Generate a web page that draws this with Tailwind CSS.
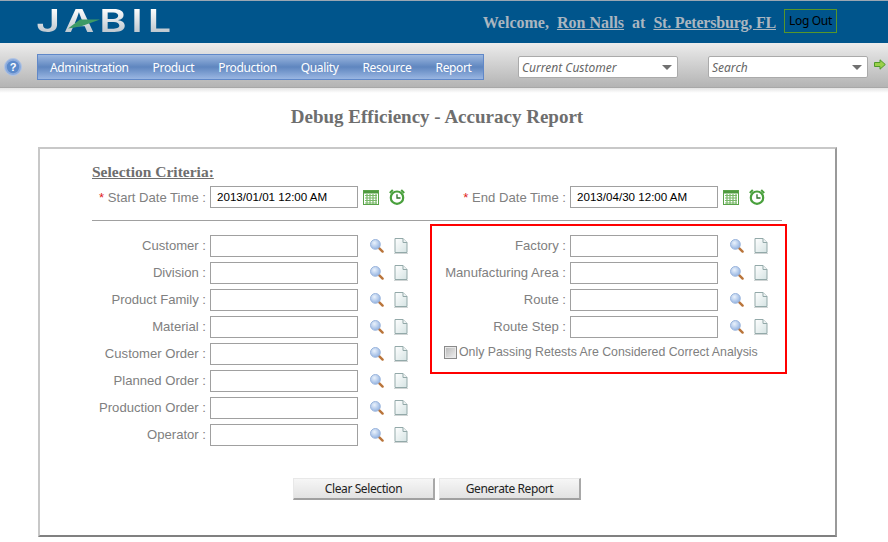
<!DOCTYPE html>
<html><head><meta charset="utf-8">
<script src="https://cdn.jsdelivr.net/npm/@tailwindcss/browser@4"></script>
</head>
<body class="bg-white w-[888px] h-[542px] overflow-hidden font-['Liberation_Sans',sans-serif]">
<svg width="0" height="0" class="absolute">
<defs>
<radialGradient id="gl" cx="0.4" cy="0.35" r="0.7"><stop offset="0" stop-color="#eaf2fc"/><stop offset="1" stop-color="#8fb0e0"/></radialGradient>
<linearGradient id="gd" x1="0" y1="0" x2="1" y2="1"><stop offset="0" stop-color="#ffffff"/><stop offset="1" stop-color="#d5e3e3"/></linearGradient>
<symbol id="mag" viewBox="0 0 14 14"><path d="M8.6 8.6 L12.6 12.6" stroke="#b9743a" stroke-width="2.4" stroke-linecap="round"/><circle cx="5.4" cy="5.4" r="4.9" fill="url(#gl)" stroke="#9ab4dc" stroke-width="1"/></symbol>
<symbol id="doc" viewBox="0 0 14 16"><path d="M1 .5H9L13 4.5V14.5H1Z" fill="url(#gd)" stroke="#93a9a9" stroke-width="1"/><path d="M9 .5V4.5H13" fill="#eef3f3" stroke="#93a9a9" stroke-width="1"/><path d="M0 15.5H14" stroke="#d0d5d5" stroke-width="1"/></symbol>
<symbol id="cal" viewBox="0 0 16 15"><rect x=".5" y=".5" width="15" height="14" fill="#fff" stroke="#5aa34a"/><rect x="1" y="1" width="14" height="2.5" fill="#4f9a3f"/><path d="M2 5.5H14M2 8H14M2 10.5H14M2 13H14M4 4V14M7 4V14M10 4V14M13 4V14" stroke="#78b868" stroke-width="1.2"/></symbol>
<symbol id="clk" viewBox="0 0 16 16"><circle cx="8" cy="8.7" r="6.2" fill="#fff" stroke="#49a03c" stroke-width="2.2"/><path d="M8 5.2V9H11.5" fill="none" stroke="#2f6f2a" stroke-width="1.3"/><path d="M.8 4 L3.8 1M15.2 4 L12.2 1" stroke="#49a03c" stroke-width="2"/></symbol>
</defs>
</svg>

<header class="h-[43px] bg-[#00558c] border-t border-[#9aa7b3] flex items-center justify-between">
  <div class="relative ml-[36px] mt-[-3px] h-[26px] w-[136px]">
    <span class="block text-[31px] leading-[26px] font-semibold tracking-[3.6px] font-['Inter',sans-serif] bg-gradient-to-b from-[#ffffff] to-[#b9c3cb] bg-clip-text text-transparent scale-x-[1.34] origin-left">JABIL</span>
    <svg class="absolute left-[32px] top-[11px]" width="32" height="10" viewBox="0 0 32 10"><path d="M0 9.5 L12 .5 L32 .5 L14 7 L4 9Z" fill="#3d9a66"/></svg>
  </div>
  <div class="flex items-center mr-[51px] mt-[-3px]">
    <p class="mt-[4px] font-['Liberation_Serif',serif] font-bold text-base text-[#aab6c0] whitespace-pre">Welcome,  <a class="underline">Ron Nalls</a>  at  <a class="underline tracking-[-0.2px]">St. Petersburg, FL</a></p>
    <span class="ml-[8px] w-[53px] h-[24px] border border-[#57962a] flex items-center justify-center text-xs tracking-[-0.3px] text-black font-['Noto_Sans',sans-serif]">Log Out</span>
  </div>
</header>

<div class="h-[45px] bg-gradient-to-b from-[#ececec] to-[#b4b4b4] border-b border-[#a8a8a8] flex items-center relative">
  <svg class="ml-[4px] mt-[3px]" width="18" height="18" viewBox="0 0 18 18"><circle cx="9" cy="9" r="8.5" fill="#8cabdc" stroke="#b0c4e4"/><circle cx="9" cy="9" r="6.2" fill="#5b8acb"/><text x="9" y="13" text-anchor="middle" font-size="11" font-weight="700" fill="#fff" font-family="Liberation Sans">?</text></svg>
  <nav class="ml-[15px] mt-[3px] w-[447px] h-[26px] border border-[#6088c8] bg-gradient-to-b from-[#9db8e0] via-[#5f86bf] to-[#9ab6e2] flex items-center pl-[12px] pt-[2px] text-xs tracking-[-0.35px] text-white font-['Noto_Sans',sans-serif]">
    <span class="mr-[24px]">Administration</span><span class="mr-[24px]">Product</span><span class="mr-[24px]">Production</span><span class="mr-[24px]">Quality</span><span class="mr-[24px]">Resource</span><span>Report</span>
  </nav>
  <div class="ml-[34px] mt-[3px] w-[160px] h-[22px] bg-white border border-[#aaaaaa] rounded-[2px] flex items-center justify-between pl-[3px] pr-[5px] pt-[2px] text-xs italic text-[#666] font-['Noto_Sans',sans-serif]"><span>Current Customer</span><span class="w-0 h-0 border-x-[5px] border-x-transparent border-t-[5px] border-t-[#707070]"></span></div>
  <div class="ml-[30px] mt-[3px] w-[160px] h-[22px] bg-white border border-[#aaaaaa] rounded-[2px] flex items-center justify-between pl-[3px] pr-[5px] pt-[2px] text-xs italic text-[#666] font-['Noto_Sans',sans-serif]"><span>Search</span><span class="w-0 h-0 border-x-[5px] border-x-transparent border-t-[5px] border-t-[#707070]"></span></div>
  <svg class="ml-[6px] mt-[-1px]" width="12" height="11" viewBox="0 0 12 11"><path d="M.5 3.5H6V.8L11.3 5.5 6 10.2V7.5H.5Z" fill="#9ad04a" stroke="#4f9a2a"/></svg>
</div>
<div class="h-[5px] bg-gradient-to-b from-[#e4e4e4] to-white"></div>

<h1 class="mt-[13px] pr-[14px] text-center font-['Liberation_Serif',serif] font-bold text-[19px] leading-[21px] text-[#6e6e6e]">Debug Efficiency - Accuracy Report</h1>

<main class="mt-[20px] ml-[38px] w-[799px] h-[390px] border-2 border-[#c8c8c8] border-r-[#9a9a9a] border-b-[#808080]">
  <section class="pl-[52px] pr-[53px] pt-[14px]">
    <h2 class="font-['Liberation_Serif',serif] font-bold text-[15.5px] leading-[18px] text-[#6e6e6e] underline">Selection Criteria:</h2>
    <div class="mt-[5px] flex h-[22px]">
      <div class="w-[338px] shrink-0 flex items-center">
        <label class="w-[114px] pt-[1px] text-right text-[13.1px] text-[#808080] whitespace-pre"><span class="text-[#e02020]">*</span> Start Date Time :</label>
        <span class="ml-[4px] w-[148px] h-[22px] border border-[#a0a0a0] px-[6px] text-[11.6px] leading-[20px] text-black">2013/01/01 12:00 AM</span>
        <svg class="ml-[5px]" width="16" height="15"><use href="#cal"/></svg>
        <svg class="ml-[10px]" width="16" height="16"><use href="#clk"/></svg>
      </div>
      <div class="flex items-center shrink-0">
        <label class="w-[136px] pt-[1px] text-right text-[13.1px] text-[#808080] whitespace-pre"><span class="text-[#e02020]">*</span> End Date Time :</label>
        <span class="ml-[4px] w-[148px] h-[22px] border border-[#a0a0a0] px-[6px] text-[11.6px] leading-[20px] text-black">2013/04/30 12:00 AM</span>
        <svg class="ml-[5px]" width="16" height="15"><use href="#cal"/></svg>
        <svg class="ml-[10px]" width="16" height="16"><use href="#clk"/></svg>
      </div>
    </div>
    <hr class="mt-[12px] border-[#a0a0a0]">
    <div class="mt-[3px] flex">
      <div class="w-[338px] shrink-0 pt-[11px] flex flex-col gap-[5px]">
        <div class="flex items-center h-[22px]"><label class="w-[114px] text-right text-[13.1px] text-[#808080]">Customer :</label><span class="ml-[4px] w-[148px] h-[22px] border border-[#a0a0a0]"></span><svg class="ml-[12px]" width="14" height="14"><use href="#mag"/></svg><svg class="ml-[10px]" width="14" height="16"><use href="#doc"/></svg></div>
        <div class="flex items-center h-[22px]"><label class="w-[114px] text-right text-[13.1px] text-[#808080]">Division :</label><span class="ml-[4px] w-[148px] h-[22px] border border-[#a0a0a0]"></span><svg class="ml-[12px]" width="14" height="14"><use href="#mag"/></svg><svg class="ml-[10px]" width="14" height="16"><use href="#doc"/></svg></div>
        <div class="flex items-center h-[22px]"><label class="w-[114px] text-right text-[13.1px] text-[#808080]">Product Family :</label><span class="ml-[4px] w-[148px] h-[22px] border border-[#a0a0a0]"></span><svg class="ml-[12px]" width="14" height="14"><use href="#mag"/></svg><svg class="ml-[10px]" width="14" height="16"><use href="#doc"/></svg></div>
        <div class="flex items-center h-[22px]"><label class="w-[114px] text-right text-[13.1px] text-[#808080]">Material :</label><span class="ml-[4px] w-[148px] h-[22px] border border-[#a0a0a0]"></span><svg class="ml-[12px]" width="14" height="14"><use href="#mag"/></svg><svg class="ml-[10px]" width="14" height="16"><use href="#doc"/></svg></div>
        <div class="flex items-center h-[22px]"><label class="w-[114px] text-right text-[13.1px] text-[#808080]">Customer Order :</label><span class="ml-[4px] w-[148px] h-[22px] border border-[#a0a0a0]"></span><svg class="ml-[12px]" width="14" height="14"><use href="#mag"/></svg><svg class="ml-[10px]" width="14" height="16"><use href="#doc"/></svg></div>
        <div class="flex items-center h-[22px]"><label class="w-[114px] text-right text-[13.1px] text-[#808080]">Planned Order :</label><span class="ml-[4px] w-[148px] h-[22px] border border-[#a0a0a0]"></span><svg class="ml-[12px]" width="14" height="14"><use href="#mag"/></svg><svg class="ml-[10px]" width="14" height="16"><use href="#doc"/></svg></div>
        <div class="flex items-center h-[22px]"><label class="w-[114px] text-right text-[13.1px] text-[#808080] whitespace-nowrap">Production Order :</label><span class="ml-[4px] w-[148px] h-[22px] border border-[#a0a0a0]"></span><svg class="ml-[12px]" width="14" height="14"><use href="#mag"/></svg><svg class="ml-[10px]" width="14" height="16"><use href="#doc"/></svg></div>
        <div class="flex items-center h-[22px]"><label class="w-[114px] text-right text-[13.1px] text-[#808080]">Operator :</label><span class="ml-[4px] w-[148px] h-[22px] border border-[#a0a0a0]"></span><svg class="ml-[12px]" width="14" height="14"><use href="#mag"/></svg><svg class="ml-[10px]" width="14" height="16"><use href="#doc"/></svg></div>
      </div>
      <div class="w-[357px] h-[150px] border-2 border-[#ff0000] pt-[9px] flex flex-col gap-[5px] shrink-0">
        <div class="flex items-center h-[22px]"><label class="w-[134px] text-right text-[13.1px] text-[#808080]">Factory :</label><span class="ml-[4px] w-[148px] h-[22px] border border-[#a0a0a0]"></span><svg class="ml-[12px]" width="14" height="14"><use href="#mag"/></svg><svg class="ml-[10px]" width="14" height="16"><use href="#doc"/></svg></div>
        <div class="flex items-center h-[22px]"><label class="w-[134px] text-right text-[13.1px] text-[#808080]">Manufacturing Area :</label><span class="ml-[4px] w-[148px] h-[22px] border border-[#a0a0a0]"></span><svg class="ml-[12px]" width="14" height="14"><use href="#mag"/></svg><svg class="ml-[10px]" width="14" height="16"><use href="#doc"/></svg></div>
        <div class="flex items-center h-[22px]"><label class="w-[134px] text-right text-[13.1px] text-[#808080]">Route :</label><span class="ml-[4px] w-[148px] h-[22px] border border-[#a0a0a0]"></span><svg class="ml-[12px]" width="14" height="14"><use href="#mag"/></svg><svg class="ml-[10px]" width="14" height="16"><use href="#doc"/></svg></div>
        <div class="flex items-center h-[22px]"><label class="w-[134px] text-right text-[13.1px] text-[#808080]">Route Step :</label><span class="ml-[4px] w-[148px] h-[22px] border border-[#a0a0a0]"></span><svg class="ml-[12px]" width="14" height="14"><use href="#mag"/></svg><svg class="ml-[10px]" width="14" height="16"><use href="#doc"/></svg></div>
        <div class="flex items-center h-[16px] ml-[12px] mt-[1px]"><span class="w-[13px] h-[13px] border border-[#8a8a8a] bg-gradient-to-br from-[#b8b8b8] to-[#f0f0f0] shadow-[inset_0_0_0_1px_#e8e8e8]"></span><span class="ml-[2px] pt-[1px] text-[12.33px] text-[#808080] whitespace-nowrap">Only Passing Retests Are Considered Correct Analysis</span></div>
      </div>
    </div>
  </section>
  <div class="mt-[32px] pr-[1px] flex justify-center gap-[4px]">
    <button class="w-[142px] h-[22px] bg-gradient-to-b from-[#f6f6f6] to-[#e2e2e2] border-t border-t-[#e8e8e8] border-l border-l-[#e8e8e8] border-r-2 border-r-[#a8a8a8] border-b-2 border-b-[#a0a0a0] text-xs tracking-[-0.4px] text-[#222] font-['Noto_Sans',sans-serif]">Clear Selection</button>
    <button class="w-[142px] h-[22px] bg-gradient-to-b from-[#f6f6f6] to-[#e2e2e2] border-t border-t-[#e8e8e8] border-l border-l-[#e8e8e8] border-r-2 border-r-[#a8a8a8] border-b-2 border-b-[#a0a0a0] text-xs tracking-[-0.4px] text-[#222] font-['Noto_Sans',sans-serif]">Generate Report</button>
  </div>
</main>
</body></html>
